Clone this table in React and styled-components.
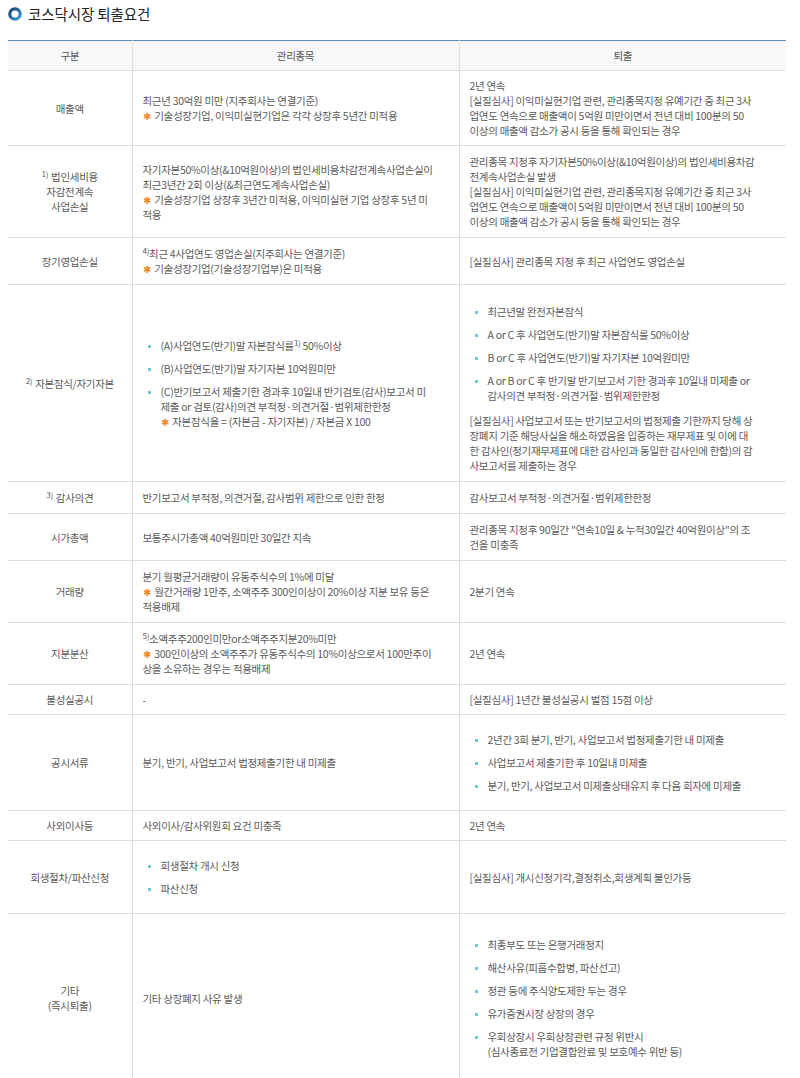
import React from 'react'
import styled, { createGlobalStyle } from 'styled-components'

const GlobalStyle = createGlobalStyle`
  body {
    margin: 0;
    background: #fff;
    font-family: "Noto Sans CJK KR", "Noto Sans", sans-serif;
  }
`

const Page = styled.div`
  padding: 0 14px 0 8px;
  color: #5a5a5a;
`

const Title = styled.h2`
  display: flex;
  align-items: center;
  gap: 6px;
  height: 27px;
  margin: 0 0 13px;
  font-size: 14.5px;
  font-weight: 400;
  color: #222;
  letter-spacing: -0.1px;
`

const Table = styled.table`
  width: 100%;
  table-layout: fixed;
  border-collapse: collapse;
  border-top: 1px solid #5a8bbd;
  font-size: 10.5px;
  line-height: 15px;
  letter-spacing: -0.3px;
`

const Th = styled.th`
  height: 29px;
  padding: 0;
  background: #f8f8f8;
  font-weight: 400;
  color: #555;
  border-bottom: 1px solid #dedede;
  & + & { border-left: 1px solid #dedede; }
`

const Td = styled.td`
  padding: ${p => p.$pad || '8px 10px'};
  text-align: ${p => (p.$center ? 'center' : 'left')};
  vertical-align: middle;
  white-space: nowrap;
  border-bottom: 1px solid #dedede;
  & + & { border-left: 1px solid #dedede; }
`

const Sup = styled.sup`
  font-size: 8px;
  line-height: 0;
  vertical-align: 4px;
  margin-right: ${p => p.$gap || '0'};
`

const Star = styled.span`
  color: #ee8a2c;
  font-size: 10px;
  margin-right: 4px;
`

const List = styled.ul`
  margin: ${p => p.$margin || '5px 0'};
  padding: 0 0 0 18px;
  list-style: none;
`

const Item = styled.li`
  position: relative;
  padding: 4px 0;
  &::before {
    content: '';
    position: absolute;
    left: -13px;
    top: 11px;
    width: 3px;
    height: 3px;
    background: #72c3d6;
  }
`

const Para = styled.div`
  margin-top: ${p => p.$top || '0'};
`

function Ring() {
  return (
    <svg width="14" height="14" viewBox="0 0 14 14">
      <defs>
        <linearGradient id="ring" x1="0" y1="0" x2="1" y2="1">
          <stop offset="0" stopColor="#163d72" />
          <stop offset="1" stopColor="#3d9fdc" />
        </linearGradient>
      </defs>
      <circle cx="7" cy="7" r="5.2" fill="none" stroke="url(#ring)" strokeWidth="3.2" />
    </svg>
  )
}

function Note({ children }) {
  return <div><Star>✱</Star>{children}</div>
}

export default function App() {
  return (
    <Page>
      <GlobalStyle />
      <Title><Ring />코스닥시장 퇴출요건</Title>
      <Table>
        <colgroup>
          <col style={{ width: '124px' }} />
          <col />
          <col />
        </colgroup>
        <thead>
          <tr>
            <Th>구분</Th>
            <Th>관리종목</Th>
            <Th>퇴출</Th>
          </tr>
        </thead>
        <tbody>
          <tr>
            <Td $center>매출액</Td>
            <Td>
              최근년 30억원 미만 (지주회사는 연결기준)
              <Note>기술성장기업, 이익미실현기업은 각각 상장후 5년간 미적용</Note>
            </Td>
            <Td $pad="7px 10px">
              2년 연속<br />
              [실질심사] 이익미실현기업 관련, 관리종목지정 유예기간 중 최근 3사<br />
              업연도 연속으로 매출액이 5억원 미만이면서 전년 대비 100분의 50<br />
              이상의 매출액 감소가 공시 등을 통해 확인되는 경우
            </Td>
          </tr>
          <tr>
            <Td $center><Sup $gap="3px">1)</Sup>법인세비용<br />자감전계속<br />사업손실</Td>
            <Td>
              자기자본50%이상(&10억원이상)의 법인세비용차감전계속사업손실이<br />
              최근3년간 2회 이상(&최근연도계속사업손실)
              <Note>기술성장기업 상장후 3년간 미적용, 이익미실현 기업 상장후 5년 미</Note>
              적용
            </Td>
            <Td>
              관리종목 지정후 자기자본50%이상(&10억원이상)의 법인세비용차감<br />
              전계속사업손실 발생<br />
              [실질심사] 이익미실현기업 관련, 관리종목지정 유예기간 중 최근 3사<br />
              업연도 연속으로 매출액이 5억원 미만이면서 전년 대비 100분의 50<br />
              이상의 매출액 감소가 공시 등을 통해 확인되는 경우
            </Td>
          </tr>
          <tr>
            <Td $center>장기영업손실</Td>
            <Td>
              <Sup>4)</Sup>최근 4사업연도 영업손실(지주회사는 연결기준)
              <Note>기술성장기업(기술성장기업부)은 미적용</Note>
            </Td>
            <Td>[실질심사] 관리종목 지정 후 최근 사업연도 영업손실</Td>
          </tr>
          <tr>
            <Td $center><Sup $gap="3px">2)</Sup>자본잠식/자기자본</Td>
            <Td>
              <List>
                <Item>(A)사업연도(반기)말 자본잠식률<Sup>1)</Sup> 50%이상</Item>
                <Item>(B)사업연도(반기)말 자기자본 10억원미만</Item>
                <Item>
                  (C)반기보고서 제출기한 경과후 10일내 반기검토(감사)보고서 미<br />
                  제출 or 검토(감사)의견 부적정·의견거절·범위제한한정
                  <Note>자본잠식율 = (자본금 - 자기자본) / 자본금 X 100</Note>
                </Item>
              </List>
            </Td>
            <Td>
              <List $margin="7px 0 6px">
                <Item>최근년말 완전자본잠식</Item>
                <Item>A or C 후 사업연도(반기)말 자본잠식률 50%이상</Item>
                <Item>B or C 후 사업연도(반기)말 자기자본 10억원미만</Item>
                <Item>
                  A or B or C 후 반기말 반기보고서 기한 경과후 10일내 미제출 or<br />
                  감사의견 부적정·의견거절·범위제한한정
                </Item>
              </List>
              <Para>
                [실질심사] 사업보고서 또는 반기보고서의 법정제출 기한까지 당해 상<br />
                장폐지 기준 해당사실을 해소하였음을 입증하는 재무제표 및 이에 대<br />
                한 감사인(정기재무제표에 대한 감사인과 동일한 감사인에 한함)의 감<br />
                사보고서를 제출하는 경우
              </Para>
            </Td>
          </tr>
          <tr>
            <Td $center><Sup $gap="3px">3)</Sup>감사의견</Td>
            <Td>반기보고서 부적정, 의견거절, 감사범위 제한으로 인한 한정</Td>
            <Td>감사보고서 부적정·의견거절·범위제한한정</Td>
          </tr>
          <tr>
            <Td $center>시가총액</Td>
            <Td>보통주시가총액 40억원미만 30일간 지속</Td>
            <Td>
              관리종목 지정후 90일간 "연속10일 &amp; 누적30일간 40억원이상"의 조<br />
              건을 미충족
            </Td>
          </tr>
          <tr>
            <Td $center>거래량</Td>
            <Td>
              분기 월평균거래량이 유동주식수의 1%에 미달
              <Note>월간거래량 1만주, 소액주주 300인이상이 20%이상 지분 보유 등은</Note>
              적용배제
            </Td>
            <Td>2분기 연속</Td>
          </tr>
          <tr>
            <Td $center>지분분산</Td>
            <Td>
              <Sup>5)</Sup>소액주주200인미만or소액주주지분20%미만
              <Note>300인이상의 소액주주가 유동주식수의 10%이상으로서 100만주이</Note>
              상을 소유하는 경우는 적용배제
            </Td>
            <Td>2년 연속</Td>
          </tr>
          <tr>
            <Td $center $pad="7px 10px">불성실공시</Td>
            <Td $pad="7px 10px">-</Td>
            <Td $pad="7px 10px">[실질심사] 1년간 불성실공시 벌점 15점 이상</Td>
          </tr>
          <tr>
            <Td $center>공시서류</Td>
            <Td>분기, 반기, 사업보고서 법정제출기한 내 미제출</Td>
            <Td>
              <List>
                <Item>2년간 3회 분기, 반기, 사업보고서 법정제출기한 내 미제출</Item>
                <Item>사업보고서 제출기한 후 10일내 미제출</Item>
                <Item>분기, 반기, 사업보고서 미제출상태유지 후 다음 회자에 미제출</Item>
              </List>
            </Td>
          </tr>
          <tr>
            <Td $center $pad="7px 10px">사외이사등</Td>
            <Td $pad="7px 10px">사외이사/감사위원회 요건 미충족</Td>
            <Td $pad="7px 10px">2년 연속</Td>
          </tr>
          <tr>
            <Td $center>회생절차/파산신청</Td>
            <Td>
              <List>
                <Item>회생절차 개시 신청</Item>
                <Item>파산신청</Item>
              </List>
            </Td>
            <Td>[실질심사] 개시신청기각,결정취소,회생계획 불인가등</Td>
          </tr>
          <tr>
            <Td $center>기타<br />(즉시퇴출)</Td>
            <Td>기타 상장폐지 사유 발생</Td>
            <Td $pad="14px 10px">
              <List>
                <Item>최종부도 또는 은행거래정지</Item>
                <Item>해산사유(피흡수합병, 파산선고)</Item>
                <Item>정관 등에 주식양도제한 두는 경우</Item>
                <Item>유가증권시장 상장의 경우</Item>
                <Item>
                  우회상장시 우회상장관련 규정 위반시<br />
                  (심사종료전 기업결합완료 및 보호예수 위반 등)
                </Item>
              </List>
            </Td>
          </tr>
        </tbody>
      </Table>
    </Page>
  )
}
